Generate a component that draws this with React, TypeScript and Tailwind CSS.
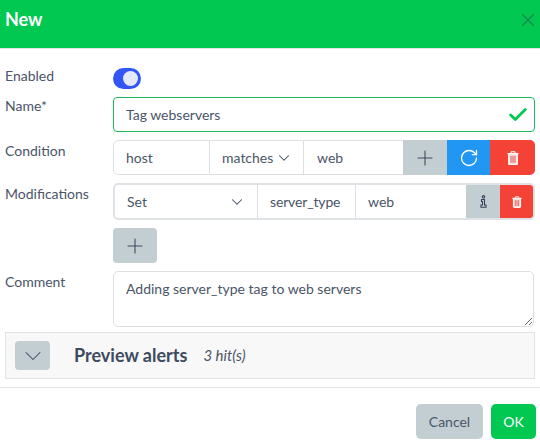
import { Check, ChevronDown, Plus, RotateCw, X } from "lucide-react";

const font = "font-['Lato','Noto_Sans',sans-serif]";

function Info() {
  return (
    <svg width="7" height="13" viewBox="0 0 7 13" fill="none" stroke="#36425e" strokeWidth="1.1">
      <circle cx="3.5" cy="1.8" r="1.2" />
      <path d="M1.5 4.5h3v5.5h1.5v2.3H1v-2.3h1.5V6.5h-1z" />
    </svg>
  );
}

function Trash({ w, h }: { w: number; h: number }) {
  return (
    <svg width={w} height={h} viewBox="0 0 12 14" fill="none">
      <path d="M.5 2.6h11" stroke="#fff" strokeWidth="1.3" />
      <path d="M4 2.4V.7h4v1.7" stroke="#fff" strokeWidth="1" />
      <path d="M1.7 3v9.7a.8.8 0 0 0 .8.8h7a.8.8 0 0 0 .8-.8V3" fill="#fde0dc" stroke="#fff" strokeWidth="1.2" />
      <path d="M4 4.8v7M6 4.8v7M8 4.8v7" stroke="#d9534f" strokeWidth="1" />
    </svg>
  );
}

export default function App() {
  return (
    <div className={`${font} w-[540px] h-[443px] bg-white text-[14px] text-[#4a5568] flex flex-col overflow-hidden`}>
      <header className="h-[49px] shrink-0 bg-[#00c851] border-b border-[#e2e5e8] flex items-center justify-between pl-[5px] pr-[1px] pb-[9px]">
        <span className="text-white font-bold text-[18px]">New</span>
        <X size={22} strokeWidth={1.4} className="text-[#0d8a4a]" />
      </header>

      <div className="flex flex-col pl-[5px] pr-[5px] pt-[19px]">
        <div className="flex h-[21px]">
          <label className="w-[108px] -mt-[1px] leading-[18px]">Enabled</label>
          <div className="w-[28px] h-[21px] rounded-full bg-[#3355f5] flex items-center justify-end pr-[3px]">
            <div className="w-[15px] h-[15px] rounded-full bg-[#e4e8fa]" />
          </div>
        </div>

        <div className="flex mt-[8px]">
          <label className="w-[108px] leading-[18px]">Name*</label>
          <div className="flex-1 h-[35px] border border-[#1fb85c] rounded-[4px] flex items-center justify-between pl-[12px] pr-[5px]">
            <span>Tag webservers</span>
            <Check size={22} strokeWidth={3} className="text-[#00c851]" />
          </div>
        </div>

        <div className="flex mt-[8px]">
          <label className="w-[108px] leading-[18px] mt-[2px]">Condition</label>
          <div className="flex-1 h-[35px] flex rounded-[5px] overflow-hidden">
            <div className="w-[97px] border border-[#dcdfe3] rounded-l-[5px] flex items-center pl-[12px]">host</div>
            <div className="w-[94px] border-y border-r border-[#dcdfe3] flex items-center justify-between pl-[12px] pr-[10px]">
              <span>matches</span>
              <ChevronDown size={18} strokeWidth={1.4} className="text-[#3e4a5e]" />
            </div>
            <div className="w-[99px] border-y border-[#dcdfe3] flex items-center pl-[13px]">web</div>
            <div className="w-[44px] bg-[#c3ced3] flex items-center justify-center"><Plus size={24} strokeWidth={1.1} className="text-[#3e4a5e]" /></div>
            <div className="w-[43px] bg-[#2196f3] flex items-center justify-center"><RotateCw size={20} strokeWidth={1.6} className="text-white" /></div>
            <div className="w-[45px] bg-[#f44336] flex items-center justify-center"><Trash w={12} h={14} /></div>
          </div>
        </div>

        <div className="flex mt-[8px]">
          <label className="w-[108px] leading-[18px] mt-[2px]">Modifications</label>
          <div className="flex-1 flex flex-col items-start">
            <div className="w-full h-[37px] border-2 border-[#dfe2e6] rounded-[5px] flex overflow-hidden">
              <div className="w-[143px] border-r border-[#dcdfe3] flex items-center justify-between pl-[12px] pr-[11px]">
                <span>Set</span>
                <ChevronDown size={18} strokeWidth={1.4} className="text-[#3e4a5e]" />
              </div>
              <div className="w-[98px] border-r border-[#dcdfe3] flex items-center pl-[12px] tracking-[-0.15px]">server_type</div>
              <div className="w-[110px] flex items-center pl-[12px]">web</div>
              <div className="w-[34px] bg-[#c3ced3] flex items-center justify-center"><Info /></div>
              <div className="flex-1 bg-[#f44336] flex items-center justify-center"><Trash w={10} h={12} /></div>
            </div>
            <button className="mt-[8px] w-[44px] h-[35px] rounded-[4px] bg-[#c3ced3] flex items-center justify-center">
              <Plus size={24} strokeWidth={1.1} className="text-[#3e4a5e]" />
            </button>
          </div>
        </div>

        <div className="flex mt-[8px]">
          <label className="w-[108px] leading-[18px] mt-[2px]">Comment</label>
          <textarea
            readOnly
            value="Adding server_type tag to web servers"
            className="flex-1 mr-[1px] h-[56px] border border-[#dcdfe3] rounded-[5px] px-[12px] py-[8px] outline-none leading-[18px] text-[14px]"
          />
        </div>

        <div className="mt-[5px] h-[47px] bg-[#f8f8f9] border border-[#e0e2e6] flex items-center pl-[9px]">
          <button className="w-[35px] h-[29px] rounded-[4px] bg-[#c3ced3] flex items-center justify-center">
            <ChevronDown size={28} strokeWidth={0.9} className="text-[#3e4a5e]" />
          </button>
          <span className="ml-[24px] font-bold text-[18px] text-[#3e4a5e]">Preview alerts</span>
          <span className="ml-[16px] italic text-[15px]">3 hit(s)</span>
        </div>
      </div>

      <footer className="mt-[8px] border-t border-[#e0e2e6] flex justify-end gap-[8px] pt-[16px] pr-[4px]">
        <button className="w-[67px] h-[35px] rounded-[5px] bg-[#c3ced3] text-[#4a5568]">Cancel</button>
        <button className="w-[45px] h-[35px] rounded-[5px] bg-[#00c851] text-white">OK</button>
      </footer>
    </div>
  );
}
